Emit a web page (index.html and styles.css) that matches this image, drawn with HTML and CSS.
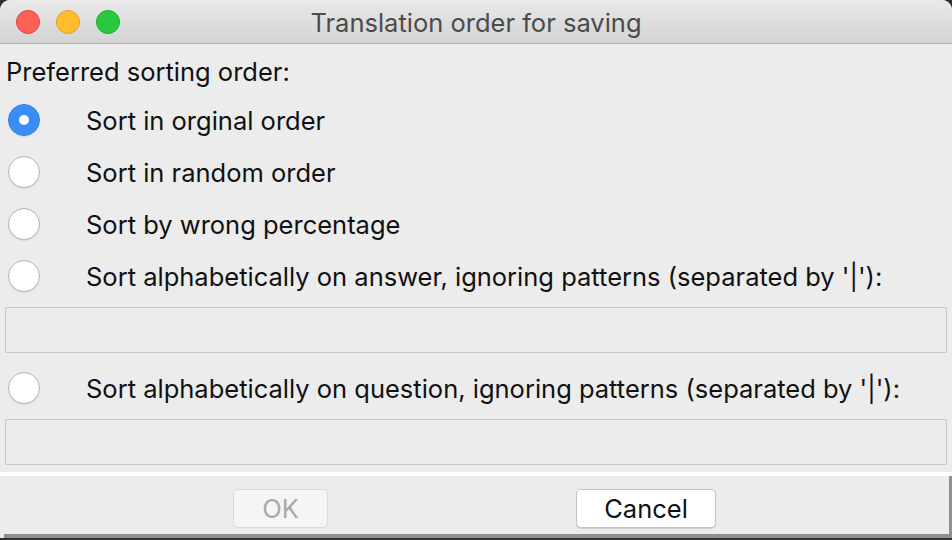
FILE: index.html
```html
<!DOCTYPE html>
<html>
<head>
<meta charset="utf-8">
<link rel="stylesheet" href="styles.css">
</head>
<body>
<div class="window">
  <div class="titlebar">
    <div class="lights">
      <span class="light red"></span>
      <span class="light yellow"></span>
      <span class="light green"></span>
    </div>
    <div class="title">Translation order for saving</div>
  </div>
  <div class="content">
    <div class="heading">Preferred sorting order:</div>
    <div class="row"><span class="radio checked"></span><span class="label">Sort in orginal order</span></div>
    <div class="row"><span class="radio"></span><span class="label">Sort in random order</span></div>
    <div class="row"><span class="radio"></span><span class="label">Sort by wrong percentage</span></div>
    <div class="row"><span class="radio"></span><span class="label">Sort alphabetically on answer, ignoring patterns (separated by '|'):</span></div>
    <div class="field"></div>
    <div class="row"><span class="radio"></span><span class="label">Sort alphabetically on question, ignoring patterns (separated by '|'):</span></div>
    <div class="field last"></div>
  </div>
  <div class="footer">
    <div class="buttons">
      <button class="btn ok" disabled>OK</button>
      <button class="btn cancel">Cancel</button>
    </div>
  </div>
</div>
</body>
</html>
```
FILE: styles.css
```css
html, body {
  margin: 0;
  padding: 0;
  background: #2f2f2f;
}
body {
  width: 952px;
  height: 540px;
  overflow: hidden;
  font-family: "Inter", "DejaVu Sans", sans-serif;
}
.window {
  width: 952px;
  height: 538px;
  background: #ececec;
  border-radius: 10px 10px 0 0;
  overflow: hidden;
  display: flex;
  flex-direction: column;
}
.titlebar {
  height: 43px;
  border-bottom: 1px solid #b1b1b1;
  background: linear-gradient(#e9e9e9, #d3d3d3);
  position: relative;
  display: flex;
  align-items: center;
  justify-content: center;
  flex: none;
}
.lights {
  position: absolute;
  left: 16px;
  top: 10px;
  display: flex;
  gap: 16px;
}
.light {
  width: 24px;
  height: 24px;
  border-radius: 50%;
  box-sizing: border-box;
}
.red { background: #fe5f57; border: 1px solid #e0443e; }
.yellow { background: #febc2e; border: 1px solid #dea123; }
.green { background: #28c840; border: 1px solid #1aab29; }
.title {
  font-size: 25.5px;
  color: #4b4b4b;
  padding-top: 2px;
}
.content {
  padding: 0 5px;
  height: 428px;
  flex: none;
  display: flex;
  flex-direction: column;
}
.heading {
  height: 50px;
  line-height: 56px;
  font-size: 25.5px;
  color: #111;
  padding-left: 1px;
}
.row {
  height: 52px;
  display: flex;
  align-items: center;
  padding-left: 3px;
}
.radio {
  width: 32px;
  height: 32px;
  border-radius: 50%;
  box-sizing: border-box;
  background: #fff;
  border: 1px solid #b4b4b4;
  box-shadow: 0 1px 1px rgba(0,0,0,0.08);
  flex: none;
  display: flex;
  align-items: center;
  justify-content: center;
}
.radio.checked {
  background: #3b8df5;
  border-color: #3784ee;
}
.radio.checked::after {
  content: "";
  width: 10px;
  height: 10px;
  border-radius: 50%;
  background: #fff;
}
.label {
  margin-left: 46px;
  font-size: 25.5px;
  color: #111;
}
.field {
  height: 46px;
  flex: none;
  box-sizing: border-box;
  border: 1px solid #c8c8c8;
  background: #ebebeb;
  margin: 5px 0 9px 0;
}
.field.last {
  margin-bottom: 7px;
}
.footer {
  flex: none;
  border-top: 4px solid #fff;
}
.buttons {
  margin-left: 4px;
  height: 45px;
  border-right: 3px solid #8f8f8f;
  border-bottom: 4px solid #8f8f8f;
  background: #ececec;
  display: flex;
  align-items: flex-start;
  padding-top: 13px;
}
.btn {
  height: 39px;
  border-radius: 5px;
  font-family: "Inter", "DejaVu Sans", sans-serif;
  font-size: 25.5px;
  padding: 0;
  box-sizing: border-box;
}
.ok {
  width: 95px;
  margin-left: 229px;
  background: #f5f5f5;
  border: 1px solid #dadada;
  color: #a9a9a9;
}
.cancel {
  width: 140px;
  margin-left: 248px;
  background: #fff;
  border: 1px solid #c4c4c4;
  box-shadow: 0 1px 1px rgba(0,0,0,0.15);
  color: #111;
}
```
